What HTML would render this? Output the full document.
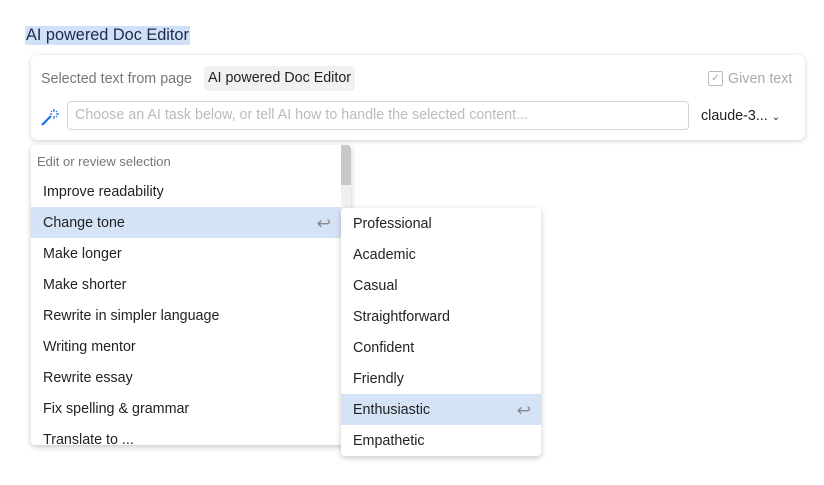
<!DOCTYPE html>
<html><head><style>
body{margin:0;width:824px;height:485px;background:#fff;font-family:"Liberation Sans",sans-serif;position:relative;overflow:hidden;color:#1f1f1f}
.abs{position:absolute}
.hl{left:25px;top:26px;height:19px;line-height:19px;font-size:16.3px;background:#cfe0f7;color:#1c2b4a;padding:0 1px}
.card{left:31px;top:55px;width:774px;height:85px;border-radius:6px;background:#fff;box-shadow:0 1px 5px rgba(0,0,0,.2)}
.menu{background:#fff;box-shadow:0 2px 6px rgba(0,0,0,.22);border-radius:4px;overflow:hidden}
.it{position:absolute;left:0;right:0;height:31px;line-height:33px;font-size:14.3px;padding-left:12px;color:#222}
.sel{background:#d4e3f6}
.ret{position:absolute;right:10px;top:0;color:#888;font-size:17px}
</style></head><body>
<div class="abs hl">AI powered Doc Editor</div>
<div class="abs card">
 <div class="abs" style="left:10px;top:14px;font-size:14.3px;color:#777;line-height:20px">Selected text from page</div>
 <div class="abs" style="left:173px;top:11px;height:25px;line-height:25px;padding:0 4px;background:#f1f1f1;border-radius:4px;font-size:14.3px;color:#222">AI powered Doc Editor</div>
 <div class="abs" style="left:677px;top:16px;width:13px;height:13px;border:1px solid #bbb;border-radius:2px;font-size:10px;line-height:13px;text-align:center;color:#aaa">✓</div>
 <div class="abs" style="left:697px;top:14px;font-size:14.3px;color:#aaa;line-height:20px">Given text</div>
 <svg class="abs" style="left:9px;top:52px" width="22" height="20" viewBox="0 0 22 20"><path d="M2 18 L11 9" stroke="#1a73e8" stroke-width="2.2"/><path d="M14 2v3M14 9v3M10 7h2M16 7h3M11 4l1 1M17 4l-1 1M17 10l-1-1" stroke="#1a73e8" stroke-width="1.2"/></svg>
 <div class="abs" style="left:36px;top:46px;width:613px;height:27px;border:1px solid #d6d6d6;border-radius:4px;font-size:14.3px;color:#bbb;line-height:27px;padding-left:7px">Choose an AI task below, or tell AI how to handle the selected content...</div>
 <div class="abs" style="left:670px;top:51px;font-size:14.3px;line-height:20px;color:#222">claude-3... <span style="font-size:10px">⌄</span></div>
</div>
<div class="abs menu" style="left:31px;top:145px;width:320px;height:300px">
 <div class="abs" style="right:0;top:0;width:10px;height:300px;background:#f0f0f0"></div>
 <div class="abs" style="right:0;top:0;width:10px;height:40px;background:#c8c8c8"></div>
 <div class="it" style="top:0;height:31px;font-size:13px;color:#777;padding-left:6px">Edit or review selection</div>
 <div class="it" style="top:31px;right:10px">Improve readability</div>
 <div class="it sel" style="top:62px;right:10px">Change tone<span class="ret">↩</span></div>
 <div class="it" style="top:93px;right:10px">Make longer</div>
 <div class="it" style="top:124px;right:10px">Make shorter</div>
 <div class="it" style="top:155px;right:10px">Rewrite in simpler language</div>
 <div class="it" style="top:186px;right:10px">Writing mentor</div>
 <div class="it" style="top:217px;right:10px">Rewrite essay</div>
 <div class="it" style="top:248px;right:10px">Fix spelling &amp; grammar</div>
 <div class="it" style="top:279px;right:10px">Translate to ...</div>
</div>
<div class="abs menu" style="left:341px;top:208px;width:200px;height:248px">
 <div class="it" style="top:0">Professional</div>
 <div class="it" style="top:31px">Academic</div>
 <div class="it" style="top:62px">Casual</div>
 <div class="it" style="top:93px">Straightforward</div>
 <div class="it" style="top:124px">Confident</div>
 <div class="it" style="top:155px">Friendly</div>
 <div class="it sel" style="top:186px">Enthusiastic<span class="ret">↩</span></div>
 <div class="it" style="top:217px">Empathetic</div>
</div>
</body></html>
